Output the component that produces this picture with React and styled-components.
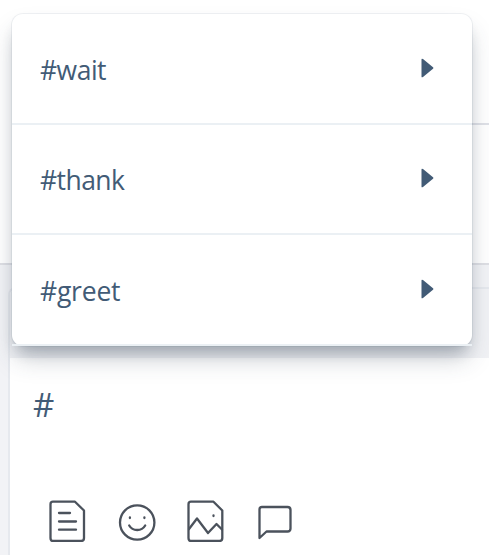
import React from 'react'
import styled, { createGlobalStyle } from 'styled-components'

const GlobalStyle = createGlobalStyle`
  * {
    box-sizing: border-box;
  }
  body {
    margin: 0;
    background: #fff;
    overflow: hidden;
  }
`
const Page = styled.div`
  position: relative;
  display: flex;
  flex-direction: column;
  width: 489px;
  height: 555px;
  overflow: hidden;
  color: #425b76;
  font-family: 'Segoe UI', 'Open Sans', sans-serif;
`
const ThreadHeader = styled.div`
  height: 125px;
  margin-left: 12px;
  border-bottom: 2px solid #dfe1e7;
`
const Thread = styled.div`
  height: 140px;
  border-bottom: 2px solid #dedfe4;
`
const ReplyArea = styled.div`
  flex: 1;
  padding: 22px 0 0 8px;
  background: #f2f3f6;
`
const Composer = styled.div`
  display: flex;
  flex-direction: column;
  height: 268px;
  border: 2px solid #e6e9ee;
  border-width: 2px 0 0 2px;
  border-radius: 8px 0 0 0;
  background: #fff;
`
const ComposerTop = styled.div`
  height: 69px;
  border-radius: 6px 0 0 0;
  background: #f1f2f5;
`
const Editor = styled.div`
  height: 138px;
  padding: 23px 0 0 23px;
  font-size: 33px;
  line-height: 48px;
`
const Toolbar = styled.div`
  display: flex;
  align-items: flex-start;
  padding-left: 38px;
`
const ToolIcon = styled.svg`
  display: block;
  width: ${({ $width }) => $width}px;
  height: 46px;
  margin-right: ${({ $gap }) => $gap || 0}px;
  fill: none;
  stroke: #4b525c;
  stroke-width: 2.3;
  stroke-linecap: round;
  stroke-linejoin: round;
`
const Menu = styled.ul`
  position: absolute;
  top: 14px;
  left: 12px;
  width: 460px;
  margin: 0;
  padding: 0;
  list-style: none;
  border-radius: 11px;
  background: #fff;
  box-shadow: 0 0 0 1px rgba(66, 91, 118, 0.08), 0 15px 26px -4px rgba(45, 62, 80, 0.28),
    0 10px 14px -5px rgba(45, 62, 80, 0.24);
`
const MenuItem = styled.li`
  display: flex;
  align-items: center;
  justify-content: space-between;
  height: ${({ $height }) => $height}px;
  padding: 0 38px 0 28px;
  border-bottom: 2px solid #ebf0f4;
`
const Label = styled.span`
  padding-top: 2px;
  font-size: 26.5px;
  line-height: 36px;
  letter-spacing: ${({ $spacing }) => $spacing}px;
`
const Arrow = styled.svg`
  display: block;
  width: 13px;
  height: 20px;
  margin-bottom: 2px;
  fill: #425b76;
`

const snippets = [
  { label: '#wait', height: 111, spacing: -0.5 },
  { label: '#thank', height: 110, spacing: -0.55 },
  { label: '#greet', height: 111, spacing: -0.2 },
]

const SnippetMenu = () => (
  <Menu>
    {snippets.map(({ label, height, spacing }) => (
      <MenuItem key={label} $height={height}>
        <Label $spacing={spacing}>{label}</Label>
        <Arrow viewBox="0 0 13 20">
          <path d="M0.5 1.5Q0.5 0 2 1.1L12 9.2Q13 10 12 10.8L2 18.9Q0.5 20 0.5 18.5Z" />
        </Arrow>
      </MenuItem>
    ))}
  </Menu>
)

const App = () => {
  return (
    <Page>
      <GlobalStyle />
      <ThreadHeader />
      <Thread />
      <ReplyArea>
        <Composer>
          <ComposerTop />
          <Editor>#</Editor>
          <Toolbar>
            <ToolIcon $width={39} $gap={31} viewBox="0 0 39 46">
              <path d="M5 5.7H27L36 14.5V42Q36 45 33 45H5Q2.5 45 2.5 42V8.2Q2.5 5.7 5 5.7Z" />
              <path d="M11 17H22M11 25.5H28M11 33.7H28" />
            </ToolIcon>
            <ToolIcon $width={38} $gap={30} viewBox="0 0 38 46">
              <circle cx="19.2" cy="26.5" r="17.2" />
              <path d="M11.2 29.5C14.7 35.5 23.7 35.5 27.2 29.5" />
              <path d="M11.9 21.5V22M26.4 21.5V22" />
            </ToolIcon>
            <ToolIcon $width={39} $gap={31} viewBox="0 0 39 46">
              <path d="M5 5.7H27.5L36.3 14.5V42Q36.3 45 33.3 45H5Q2.5 45 2.5 42V8.2Q2.5 5.7 5 5.7Z" />
              <path d="M3 33L11 22.5L22 37L30.5 28L36 33.5" />
              <path d="M27.5 19.5V20" />
            </ToolIcon>
            <ToolIcon $width={38} viewBox="0 0 38 46">
              <path d="M6 11H31.5Q34.5 11 34.5 14V32.5Q34.5 35.5 31.5 35.5H10.5L3.5 42V13.5Q3.5 11 6 11Z" />
            </ToolIcon>
          </Toolbar>
        </Composer>
      </ReplyArea>
      <SnippetMenu />
    </Page>
  )
}

export default App
